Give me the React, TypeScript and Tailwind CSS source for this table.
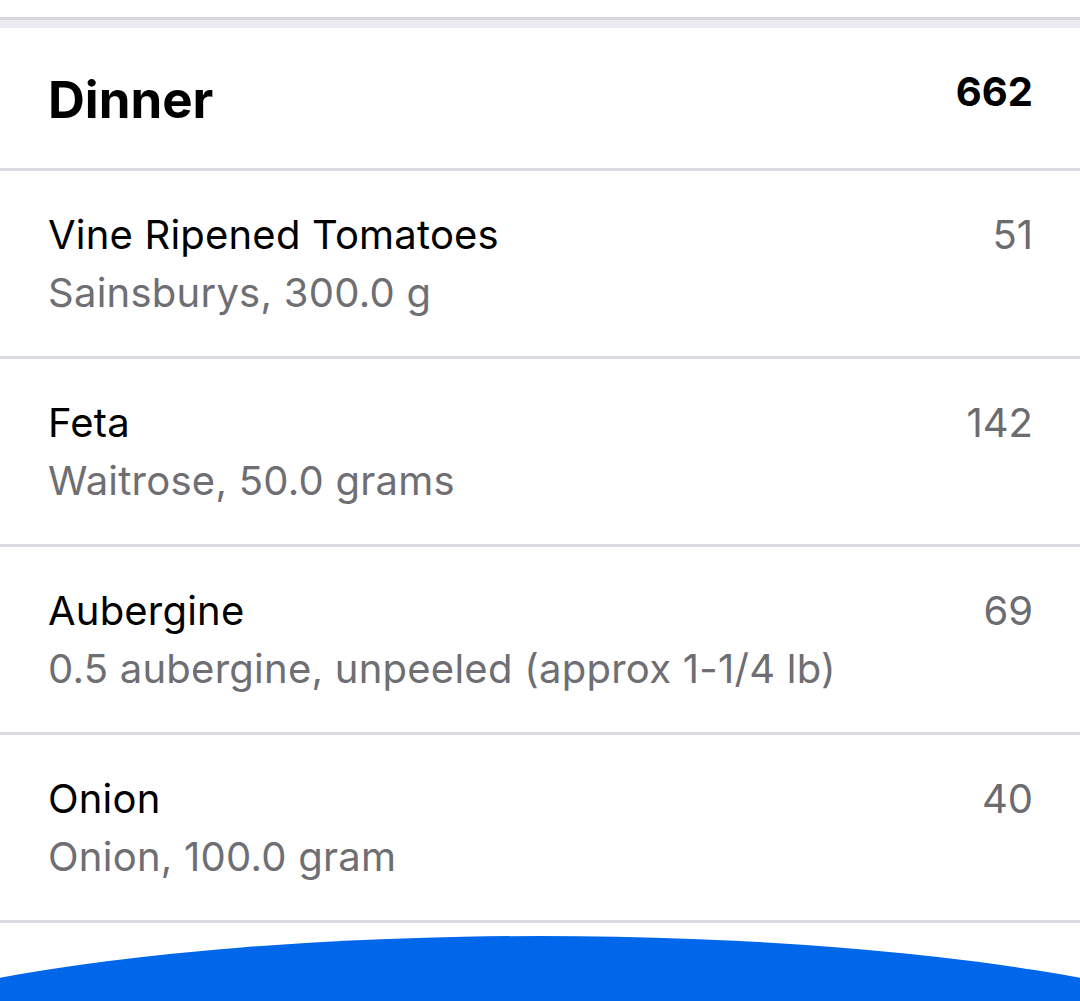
import React from "react";

const items = [
  { name: "Vine Ripened Tomatoes", sub: "Sainsburys, 300.0 g", cal: "51" },
  { name: "Feta", sub: "Waitrose, 50.0 grams", cal: "142" },
  { name: "Aubergine", sub: "0.5 aubergine, unpeeled (approx 1-1/4 lb)", cal: "69" },
  { name: "Onion", sub: "Onion, 100.0 gram", cal: "40" },
];

export default function App() {
  return (
    <div
      className="relative w-[1080px] h-[1001px] overflow-hidden bg-white"
      style={{ fontFamily: "Inter, 'Noto Sans', sans-serif" }}
    >
      <div className="h-[17px] bg-white" />
      <div className="h-[3px] bg-[#d7d7dc]" />
      <div className="h-[8px] bg-[#ebebf0]" />
      <div className="h-[143px] flex justify-between items-start pl-[48px] pr-[47px] pt-[44px] border-b-[3px] border-[#dcdce0]">
        <div className="text-[51px] leading-none font-bold text-black mt-[2px]">Dinner</div>
        <div className="text-[40px] leading-none font-bold text-black">662</div>
      </div>
      {items.map((it) => (
        <div
          key={it.name}
          className="h-[188px] flex justify-between items-start pl-[48px] pr-[47px] pt-[44px] border-b-[3px] border-[#dcdce0]"
        >
          <div className="flex flex-col">
            <div className="text-[40px] leading-none text-black tracking-[0.2px]">{it.name}</div>
            <div className="text-[40px] leading-none text-[#6e6e73] mt-[18px] tracking-[0.25px]">{it.sub}</div>
          </div>
          <div className="text-[40px] leading-none text-[#6b6b70]">{it.cal}</div>
        </div>
      ))}
      <div className="absolute left-[-240px] top-[936px] w-[1560px] h-[300px] rounded-[50%] bg-[#0066ea]" />
    </div>
  );
}
